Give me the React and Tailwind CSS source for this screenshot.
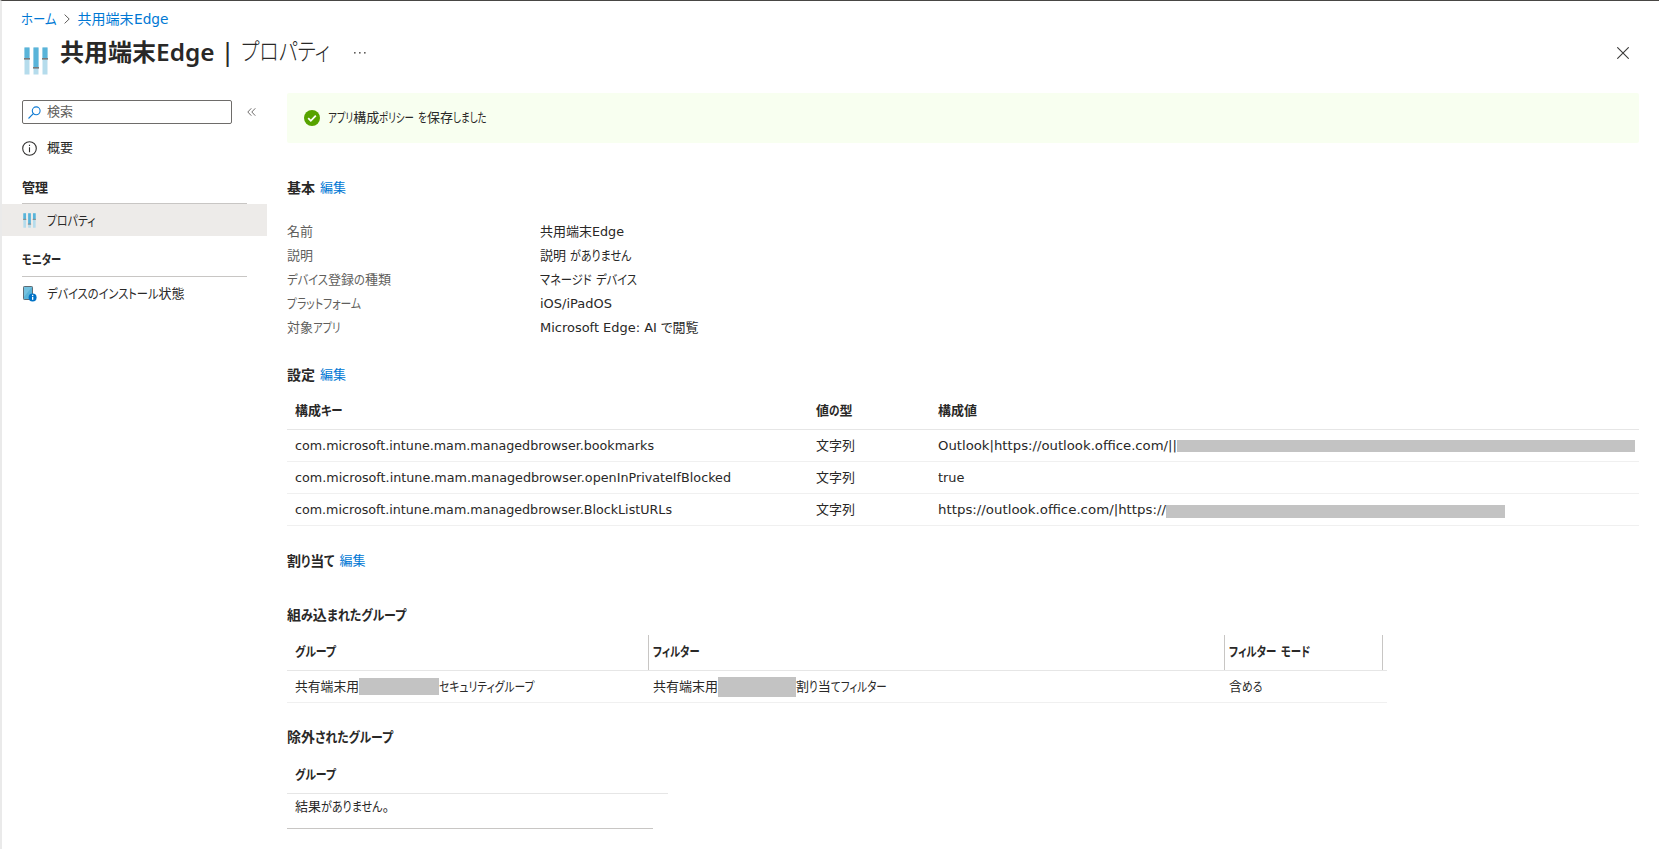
import React, { useLayoutEffect, useRef } from "react";

const KANA = /([\u3040-\u30ff]+)/;

/* Text set to a given advance width. Kana are condensed next to full-width kanji;
   a text without kana is condensed as a whole. */
function T({ w, children, className = "" }) {
  const ref = useRef(null);
  const parts = children.split(KANA).filter(Boolean);
  const hasKana = KANA.test(children);
  useLayoutEffect(() => {
    const spans = [...ref.current.children];
    spans.forEach((s) => {
      s.style.transform = "";
      s.style.marginRight = "";
    });
    const sizes = spans.map((s) => s.getBoundingClientRect().width);
    const flexible = spans.map((s) => !hasKana || KANA.test(s.textContent));
    const fixedSum = sizes.reduce((a, v, i) => a + (flexible[i] ? 0 : v), 0);
    const flexSum = sizes.reduce((a, v, i) => a + (flexible[i] ? v : 0), 0);
    const k = (w - fixedSum) / flexSum;
    spans.forEach((s, i) => {
      if (!flexible[i]) return;
      s.style.transform = `scaleX(${k})`;
      s.style.marginRight = `${(k - 1) * sizes[i]}px`;
    });
  }, [w, children, hasKana]);
  return (
    <span ref={ref} className={`inline-flex whitespace-pre shrink-0 ${className}`}>
      {parts.map((p, i) => (
        <span key={i} className="inline-block shrink-0 origin-left">
          {p}
        </span>
      ))}
    </span>
  );
}

function Sliders({ className }) {
  return (
    <svg viewBox="0 0 24 28" className={className}>
      {[
        [0.5, 11],
        [9.5, 20],
        [18.5, 11],
      ].map(([x, y]) => (
        <g key={x}>
          <rect x={x} y="0.5" width="5" height="27" fill="#b5dcec" />
          <rect x={x} y="0.5" width="5" height={y} fill="#59b4d9" />
          <rect x={x - 0.5} y={y} width="6" height="1.6" fill="#7a7a7a" />
        </g>
      ))}
    </svg>
  );
}

function DeviceIcon() {
  return (
    <svg viewBox="0 0 14 16" className="h-4 w-3.5">
      <rect x="0.5" y="0.5" width="9" height="13" rx="0.8" fill="#59b4d9" stroke="#5f6b73" />
      <path d="M1 1h8L1 11z" fill="#8fd0e8" opacity=".5" />
      <circle cx="9.6" cy="11.4" r="4" fill="#0072c6" />
      <rect x="9" y="10.8" width="1.3" height="3" fill="#fff" />
      <rect x="9" y="8.8" width="1.3" height="1.2" fill="#fff" />
    </svg>
  );
}

const Edit = () => <a className="text-[13px] text-[#0078d4]">編集</a>;

const Mask = ({ className }) => <span className={`shrink-0 bg-[#c3c3c3] ${className}`} />;

const basics = [
  ["名前", 26, <><T w={52}>共用端末</T><T w={32}>Edge</T></>],
  ["説明", 26, <T w={91.5}>説明 がありません</T>],
  ["デバイス登録の種類", 104, <T w={97}>マネージド デバイス</T>],
  ["プラットフォーム", 74, <T w={72}>iOS/iPadOS</T>],
  ["対象アプリ", 53.5, <><T w={121}>Microsoft Edge: AI </T><T w={37.5}>で閲覧</T></>],
];

const settings = [
  ["bookmarks", 359, <><T w={239}>Outlook|https://outlook.office.com/||</T><Mask className="h-3 w-[458px]" /></>],
  ["openInPrivateIfBlocked", 436, <T w={26.5}>true</T>],
  ["BlockListURLs", 377, <><T w={228}>https://outlook.office.com/|https://</T><Mask className="mt-1 h-[13px] w-[339px]" /></>],
];

export default function App() {
  return (
    <div className="flex h-[849px] w-full flex-col overflow-hidden border-t border-l-2 border-t-[#484644] border-l-[#eaeaea] bg-white font-['DejaVu_Sans','Noto_Sans_CJK_JP',sans-serif] text-[13px] leading-6 text-[#292827] [font-feature-settings:'palt']">
      <nav className="flex h-9 shrink-0 items-center pl-[19px] text-sm text-[#0078d4]">
        <T w={35.5}>ホーム</T>
        <svg viewBox="0 0 6 10" className="mr-[8px] ml-[7px] h-2.5 w-1.5" fill="none" stroke="#605e5c">
          <path d="M.6.6 5.2 5 .6 9.4" />
        </svg>
        <T w={56}>共用端末</T>
        <T w={34.5}>Edge</T>
      </nav>

      <header className="flex h-[54px] shrink-0 items-start pl-[22px] text-2xl leading-8">
        <Sliders className="mt-[10px] mr-[12px] h-7 w-6" />
        <h1 className="flex font-['Noto_Sans','Noto_Sans_CJK_JP',sans-serif] font-semibold">
          <T w={96} className="-mt-[1px]">共用端末</T>
          <T w={58.5} className="-mt-[1px]">Edge</T>
        </h1>
        <span className="ml-[8px] w-[10px] text-center">|</span>
        <T w={89} className="-mt-[1px] ml-[9px] font-light">プロパティ</T>
        <svg viewBox="0 0 12 2" className="mt-[15px] ml-[24px] h-0.5 w-3" fill="#605e5c">
          <rect x="0" width="1.6" height="1.6" />
          <rect x="5" width="1.6" height="1.6" />
          <rect x="10" width="1.6" height="1.6" />
        </svg>
        <svg viewBox="0 0 12 12" className="mt-[10px] mr-[30px] ml-auto size-3" fill="none" stroke="#3b3a39" strokeWidth="1.1">
          <path d="m.3.3 11.4 11.4M11.7.3.3 11.7" />
        </svg>
      </header>

      <div className="flex min-h-0 flex-1">
        <aside className="flex w-[265px] shrink-0 flex-col pt-[9px]">
          <div className="flex items-center pl-5">
            <div className="flex h-6 w-[210px] items-center rounded-xs border border-[#6e6c6a] pl-[5px] text-[#605e5c]">
              <svg viewBox="0 0 13 13" className="mr-[6px] size-[13px]" fill="none" stroke="#0f7bd4" strokeWidth="1.1">
                <circle cx="8.2" cy="4.8" r="3.9" />
                <path d="M5.3 7.7.5 12.5" />
              </svg>
              検索
            </div>
            <svg viewBox="0 0 9 8" className="ml-[15px] h-2 w-[9px]" fill="none" stroke="#605e5c" strokeWidth=".9">
              <path d="M4.3.3.8 4l3.5 3.7M8.3.3 4.8 4l3.5 3.7" />
            </svg>
          </div>

          <div className="mt-[9px] flex h-[30px] items-center gap-[10px] pl-5">
            <svg viewBox="0 0 15 15" className="size-[15px]" fill="none" stroke="#323130" strokeWidth="1.1">
              <circle cx="7.5" cy="7.5" r="6.8" />
              <path d="M7.5 6.2v5M7.5 3.8v1.3" />
            </svg>
            概要
          </div>

          <div className="mt-[9px] ml-5 flex h-8 w-[225px] items-center border-b border-[#c8c6c4] font-semibold">管理</div>
          <div className="flex h-8 items-center bg-[#edebe9] pl-[21px]">
            <Sliders className="mr-[11px] h-[15px] w-[13px]" />
            <T w={48.5} className="pt-0.5">プロパティ</T>
          </div>

          <div className="mt-2 ml-5 flex h-[33px] w-[225px] items-center border-b border-[#c8c6c4] font-semibold">
            <T w={39}>モニター</T>
          </div>
          <div className="flex h-[34px] items-center gap-[10px] pl-[21px]">
            <DeviceIcon />
            <T w={137.5}>デバイスのインストール状態</T>
          </div>
        </aside>

        <main className="flex min-w-0 flex-1 flex-col px-5 pt-0.5">
          <div className="flex h-[50px] shrink-0 items-center rounded-xs bg-[#f8fff0] pl-[17px]">
            <svg viewBox="0 0 16 16" className="mr-2 size-4">
              <circle cx="8" cy="8" r="8" fill="#57a300" />
              <path d="m4.2 8.2 2.6 2.6 5-5.2" fill="none" stroke="#fff" strokeWidth="1.8" />
            </svg>
            <T w={158.5}>アプリ構成ポリシー を保存しました</T>
          </div>

          <h2 className="mt-[33px] flex h-6 shrink-0 items-center gap-[5px]">
            <span className="text-sm font-semibold">基本</span>
            <Edit />
          </h2>
          <dl className="mt-5 shrink-0">
            {basics.map(([label, w, value]) => (
              <div key={label} className="flex h-6 items-center">
                <dt className="w-[253px] text-[#605e5c]">
                  <T w={w}>{label}</T>
                </dt>
                <dd className="flex">{value}</dd>
              </div>
            ))}
          </dl>

          <h2 className="mt-[23px] flex h-6 shrink-0 items-center gap-[5px]">
            <span className="text-sm font-semibold">設定</span>
            <Edit />
          </h2>
          <section className="mt-[6px] shrink-0">
            <div className="flex h-[37px] items-center border-b border-[#e6e6e6] pl-2 font-semibold">
              <div className="w-[521px]"><T w={47.5}>構成キー</T></div>
              <div className="w-[122px]"><T w={36.5}>値の型</T></div>
              <div>構成値</div>
            </div>
            {settings.map(([key, w, value]) => (
              <div key={key} className="flex h-8 items-center border-b border-[#f0f0f0] pl-2">
                <div className="w-[521px]">
                  <T w={w}>{`com.microsoft.intune.mam.managedbrowser.${key}`}</T>
                </div>
                <div className="w-[122px]">文字列</div>
                <div className="flex items-center">{value}</div>
              </div>
            ))}
          </section>

          <h2 className="mt-[23px] flex h-6 shrink-0 items-center gap-[5px]">
            <T w={47.5} className="text-sm font-semibold">割り当て</T>
            <Edit />
          </h2>

          <h3 className="mt-[30px] h-6 shrink-0 text-sm leading-6 font-semibold">
            <T w={119}>組み込まれたグループ</T>
          </h3>
          <section className="mt-2 w-[1100px] shrink-0">
            <div className="flex h-9 border-b border-[#e6e6e6] font-semibold">
              <div className="flex w-[362px] items-center border-r border-[#c8c6c4] pl-2 pb-px"><T w={41}>グループ</T></div>
              <div className="flex w-[576px] items-center border-r border-[#c8c6c4] pl-1 pb-px"><T w={46.5}>フィルター</T></div>
              <div className="flex w-[158px] items-center border-r border-[#c8c6c4] pl-1 pb-px"><T w={81}>フィルター モード</T></div>
            </div>
            <div className="flex h-8 items-center border-b border-[#f0f0f0]">
              <div className="flex w-[366px] items-center pl-2">
                <T w={64}>共有端末用</T>
                <Mask className="h-[17px] w-20" />
                <T w={95.5}>セキュリティグループ</T>
              </div>
              <div className="flex w-[576px] items-center">
                <T w={65}>共有端末用</T>
                <Mask className="h-5 w-[78px]" />
                <T w={90.5}>割り当てフィルター</T>
              </div>
              <T w={33.5}>含める</T>
            </div>
          </section>

          <h3 className="mt-[22px] h-6 shrink-0 text-sm leading-6 font-semibold">
            <T w={106}>除外されたグループ</T>
          </h3>
          <section className="mt-[7px] shrink-0">
            <div className="flex h-[38px] w-[381px] items-center border-b border-[#e6e6e6] pl-2 font-semibold">
              <T w={41}>グループ</T>
            </div>
            <div className="flex h-[35px] w-[366px] items-start border-b border-[#c8c6c4] pt-px pl-2">
              <T w={94}>結果がありません。</T>
            </div>
          </section>
        </main>
      </div>
    </div>
  );
}
